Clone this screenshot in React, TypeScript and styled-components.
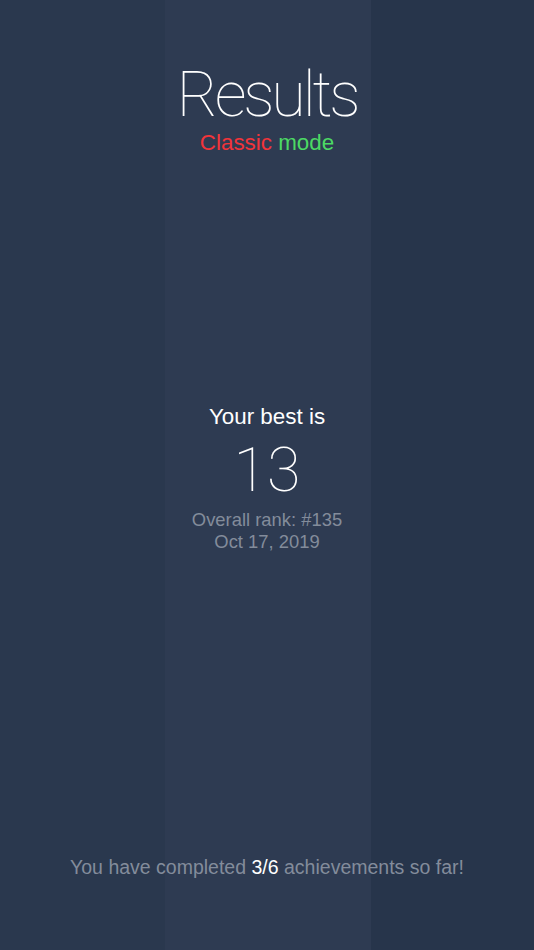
import * as React from 'react';
import styled, { createGlobalStyle } from 'styled-components';

const GlobalStyle = createGlobalStyle`
  html, body {
    margin: 0;
    padding: 0;
  }
  body {
    font-family: "Liberation Sans", Arial, sans-serif;
    background: #293850;
  }
`;

const Screen = styled.div`
  width: 534px;
  height: 950px;
  display: flex;
  flex-direction: column;
  align-items: center;
  background: linear-gradient(
    90deg,
    #2a384e 0,
    #2a384e 165px,
    #2e3b52 165px,
    #2e3b52 371px,
    #27354b 371px,
    #27354b 100%
  );
  color: #ffffff;
  text-align: center;
`;

const Header = styled.header`
  padding-top: 61px;
  display: flex;
  flex-direction: column;
  align-items: center;
`;

const Title = styled.h1`
  margin: 0;
  font-family: Roboto, "Liberation Sans", sans-serif;
  font-weight: 100;
  font-size: 63px;
  line-height: 68px;
  letter-spacing: -3.2px;
  color: #ffffff;
`;

const Mode = styled.div`
  margin-top: 2px;
  font-size: 22.4px;
  line-height: 24px;
`;

const Word = styled.span<{ $color: string }>`
  color: ${(p) => p.$color};
`;

const Best = styled.section`
  margin-top: 250px;
  display: flex;
  flex-direction: column;
  align-items: center;
`;

const BestLabel = styled.div`
  font-size: 22.4px;
  line-height: 24px;
  color: #ffffff;
`;

const Score = styled.div`
  margin-top: 8px;
  font-family: Roboto, "Liberation Sans", sans-serif;
  font-weight: 100;
  font-size: 61px;
  line-height: 66px;
`;

const Meta = styled.div`
  margin-top: 6px;
  font-size: 18.4px;
  line-height: 22px;
  color: #838c9b;
`;

const Footer = styled.footer`
  margin-top: auto;
  margin-bottom: 72px;
  font-size: 19.5px;
  line-height: 22px;
  color: #838c9b;
`;

const Strong = styled.span`
  color: #ffffff;
`;

export default function App() {
  return (
    <>
      <GlobalStyle />
      <Screen>
        <Header>
          <Title>Results</Title>
          <Mode>
            <Word $color="#f2343a">Classic</Word> <Word $color="#4cd964">mode</Word>
          </Mode>
        </Header>
        <Best>
          <BestLabel>Your best is</BestLabel>
          <Score>13</Score>
          <Meta>
            Overall rank: #135
            <br />
            Oct 17, 2019
          </Meta>
        </Best>
        <Footer>
          You have completed <Strong>3/6</Strong> achievements so far!
        </Footer>
      </Screen>
    </>
  );
}
